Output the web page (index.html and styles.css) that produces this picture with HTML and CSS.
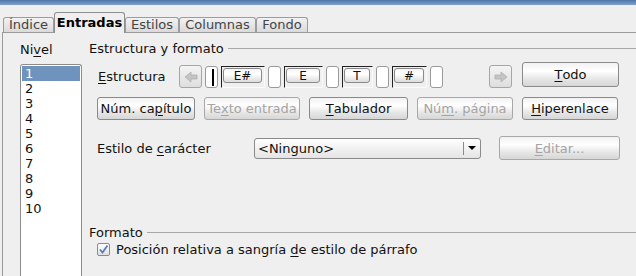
FILE: index.html
```html
<!DOCTYPE html>
<html lang="es">
<head>
<meta charset="utf-8">
<title>Entradas</title>
<link rel="stylesheet" href="styles.css">
</head>
<body>
<div class="titlebar"></div>
<div class="tabs">
  <div class="tab t-indice">Índice</div>
  <div class="tab active t-entradas">Entradas</div>
  <div class="tab t-estilos">Estilos</div>
  <div class="tab t-columnas">Columnas</div>
  <div class="tab t-fondo">Fondo</div>
</div>
<div class="panel">
  <div class="levels">
    <div class="lbl">Ni<u>v</u>el</div>
    <div class="listbox">
      <div class="item sel">1</div>
      <div class="item">2</div>
      <div class="item">3</div>
      <div class="item">4</div>
      <div class="item">5</div>
      <div class="item">6</div>
      <div class="item">7</div>
      <div class="item">8</div>
      <div class="item">9</div>
      <div class="item">10</div>
    </div>
  </div>
  <div class="main">
    <div class="sechead"><span>Estructura y formato</span><span class="rule"></span></div>
    <div class="row row-struct">
      <span class="struct-lbl"><u>E</u>structura</span>
      <span class="arrow">
        <svg width="14" height="12" viewBox="0 0 14 12"><path d="M1 6 L7 1 L7 4 L13 4 L13 8 L7 8 L7 11 Z" fill="#c4c4c4" stroke="#b0b0b0" stroke-width="0.8" stroke-linejoin="round"/></svg>
      </span>
      <div class="strip">
        <span class="slot"><span class="caret"></span></span>
        <span class="tok w-ehash"><span class="tokbtn">E#</span></span>
        <span class="slot"></span>
        <span class="tok w-e"><span class="tokbtn">E</span></span>
        <span class="slot"></span>
        <span class="tok w-t"><span class="tokbtn">T</span></span>
        <span class="slot"></span>
        <span class="tok w-hash"><span class="tokbtn">#</span></span>
        <span class="slot"></span>
      </div>
      <span class="arrow arrow-r">
        <svg width="14" height="12" viewBox="0 0 14 12"><path d="M13 6 L7 1 L7 4 L1 4 L1 8 L7 8 L7 11 Z" fill="#c4c4c4" stroke="#b0b0b0" stroke-width="0.8" stroke-linejoin="round"/></svg>
      </span>
      <span class="btn todo"><u>T</u>odo</span>
    </div>
    <div class="row row-btns">
      <span class="btn">Núm. ca<u>p</u>ítulo</span>
      <span class="btn dis">Te<u>x</u>to entrada</span>
      <span class="btn"><u>T</u>abulador</span>
      <span class="btn dis">Nú<u>m</u>. página</span>
      <span class="btn"><u>H</u>iperenlace</span>
    </div>
    <div class="row row-style">
      <span class="style-lbl">Estilo de <u>c</u>arácter</span>
      <div class="combo">
        <span class="combo-text">&lt;Ninguno&gt;</span>
        <span class="combo-btn"><span class="tri"></span></span>
      </div>
      <span class="btn dis editar"><u>E</u>ditar...</span>
    </div>
    <div class="sechead sec-format"><span>Formato</span><span class="rule"></span></div>
    <div class="row row-check">
      <span class="check">
        <svg width="11" height="11" viewBox="0 0 11 11"><path d="M2 5.5 L4.5 8.5 L9.5 1.5" fill="none" stroke="#5a7fb5" stroke-width="1.8"/></svg>
      </span>
      <span>Posición relativa a sangría <u>d</u>e estilo de párrafo</span>
    </div>
  </div>
</div>
</body>
</html>
```

FILE: styles.css
```css
* { box-sizing: border-box; }
html, body {
  margin: 0;
  width: 636px;
  height: 276px;
  overflow: hidden;
  background: #efefef;
  font-family: "DejaVu Sans", sans-serif;
  font-size: 13px;
  color: #111;
}
u { text-decoration: underline; text-underline-offset: 2px; }

.titlebar {
  height: 5px;
  background: linear-gradient(#4d76a8, #7fa0c8);
}

.tabs {
  display: flex;
  align-items: flex-end;
  height: 27px;
  padding-left: 3px;
}
.tab {
  height: 15px;
  line-height: 14px;
  text-align: center;
  border: 1px solid #9c9c9c;
  border-bottom: none;
  border-radius: 3px 3px 0 0;
  background: linear-gradient(#f2f2f2, #dadada);
  color: #444;
  white-space: nowrap;
}
.tab.active {
  height: 21px;
  line-height: 19px;
  margin-bottom: -1px;
  background: #efefef;
  border-color: #8e8e8e;
  color: #000;
  font-weight: bold;
  z-index: 1;
}
.t-indice { width: 51px; }
.t-entradas { width: 71px; }
.t-estilos { width: 54px; }
.t-columnas { width: 77px; }
.t-fondo { width: 52px; }

.panel {
  display: flex;
  margin-left: 2px;
  border-top: 1px solid #9a9a9a;
  border-left: 1px solid #9a9a9a;
  height: 244px;
  overflow: hidden;
}

.levels {
  width: 84px;
  padding: 9px 0 0 17px;
}
.lbl { line-height: 16px; }
.listbox {
  margin-top: 6px;
  width: 62px;
  height: 212px;
  background: #fff;
  border: 1px solid #8c8c8c;
  border-bottom: none;
  border-radius: 3px 3px 0 0;
  padding: 1px;
}
.item {
  height: 15px;
  line-height: 15px;
  padding-left: 3px;
}
.item.sel {
  background: #7093bd;
  color: #fff;
}

.main {
  flex: 1;
  padding-top: 7px;
}
.sechead {
  display: flex;
  align-items: center;
  height: 16px;
  padding-left: 2px;
}
.rule {
  flex: 1;
  border-top: 1px solid #a8a8a8;
  margin-left: 4px;
  margin-top: 1px;
}

.row {
  display: flex;
  padding-left: 10px;
}
.row-struct {
  margin-top: 6px;
  height: 26px;
  align-items: flex-end;
  padding-right: 17px;
}
.struct-lbl {
  width: 82px;
  padding-left: 1px;
  line-height: 22px;
}
.arrow {
  width: 23px;
  height: 23px;
  border: 1px solid #a6a6a6;
  border-radius: 3px;
  background: linear-gradient(#f4f4f4, #dedede);
  display: flex;
  align-items: center;
  justify-content: center;
}
.arrow-r { margin-left: auto; margin-right: 10px; }

.strip {
  display: flex;
  gap: 3px;
  margin-left: 3px;
  height: 22px;
}
.slot {
  width: 13px;
  height: 22px;
  background: #fff;
  border: 1px solid #9a9a9a;
  border-radius: 3px;
  display: flex;
  justify-content: center;
  padding-top: 2px;
}
.caret {
  width: 2px;
  height: 17px;
  background: #000;
  margin-left: 3px;
}
.tok {
  height: 22px;
  border-top: 1px solid #222;
  border-left: 1px solid #222;
  border-right: 1px solid #fafafa;
  border-bottom: 1px solid #fafafa;
  padding: 1px 2px 4px 1px;
}
.tokbtn {
  display: block;
  height: 15px;
  line-height: 14px;
  text-align: center;
  border: 1px solid #8a8a8a;
  border-radius: 3px;
  background: linear-gradient(#f6f6f6, #ffffff 40%, #dcdcdc);
  font-size: 12px;
}
.w-ehash { width: 44px; }
.w-e { width: 39px; }
.w-t { width: 31px; }
.w-hash { width: 35px; }

.btn {
  display: inline-flex;
  align-items: center;
  justify-content: center;
  height: 23px;
  border: 1px solid #8a8a8a;
  border-radius: 3px;
  background: linear-gradient(#f2f2f2, #ffffff 35%, #e6e6e6 70%, #d6d6d6);
  color: #111;
  white-space: nowrap;
}
.btn.dis {
  color: #a4a4a4;
  border-color: #a8a8a8;
}
.todo {
  width: 97px;
  height: 25px;
  margin-bottom: 1px;
}

.row-btns {
  margin-top: 9px;
  display: grid;
  grid-template-columns: 98px 96px 99px 96px 96px;
  column-gap: 9px;
}

.row-style {
  margin-top: 16px;
  height: 24px;
  align-items: center;
}
.style-lbl { width: 157px; }
.combo {
  display: flex;
  width: 227px;
  height: 21px;
  border: 1px solid #8a8a8a;
  border-radius: 3px;
  background: linear-gradient(#ffffff, #e4e4e4);
}
.combo-text {
  flex: 1;
  padding-left: 3px;
  line-height: 19px;
}
.combo-btn {
  width: 17px;
  border-left: 1px solid #8a8a8a;
  margin: 3px 0;
  display: flex;
  align-items: center;
  justify-content: center;
}
.tri {
  width: 0;
  height: 0;
  border-left: 4px solid transparent;
  border-right: 4px solid transparent;
  border-top: 4px solid #000;
}
.editar {
  width: 121px;
  height: 24px;
  margin-left: 18px;
}

.sec-format { margin-top: 64px; }
.row-check {
  margin-top: 1px;
  height: 16px;
  align-items: center;
  gap: 6px;
}
.check {
  width: 13px;
  height: 13px;
  border: 1px solid #8a8a8a;
  border-radius: 2px;
  background: linear-gradient(#ffffff, #e0e0e0);
  display: flex;
  align-items: center;
  justify-content: center;
}
```
